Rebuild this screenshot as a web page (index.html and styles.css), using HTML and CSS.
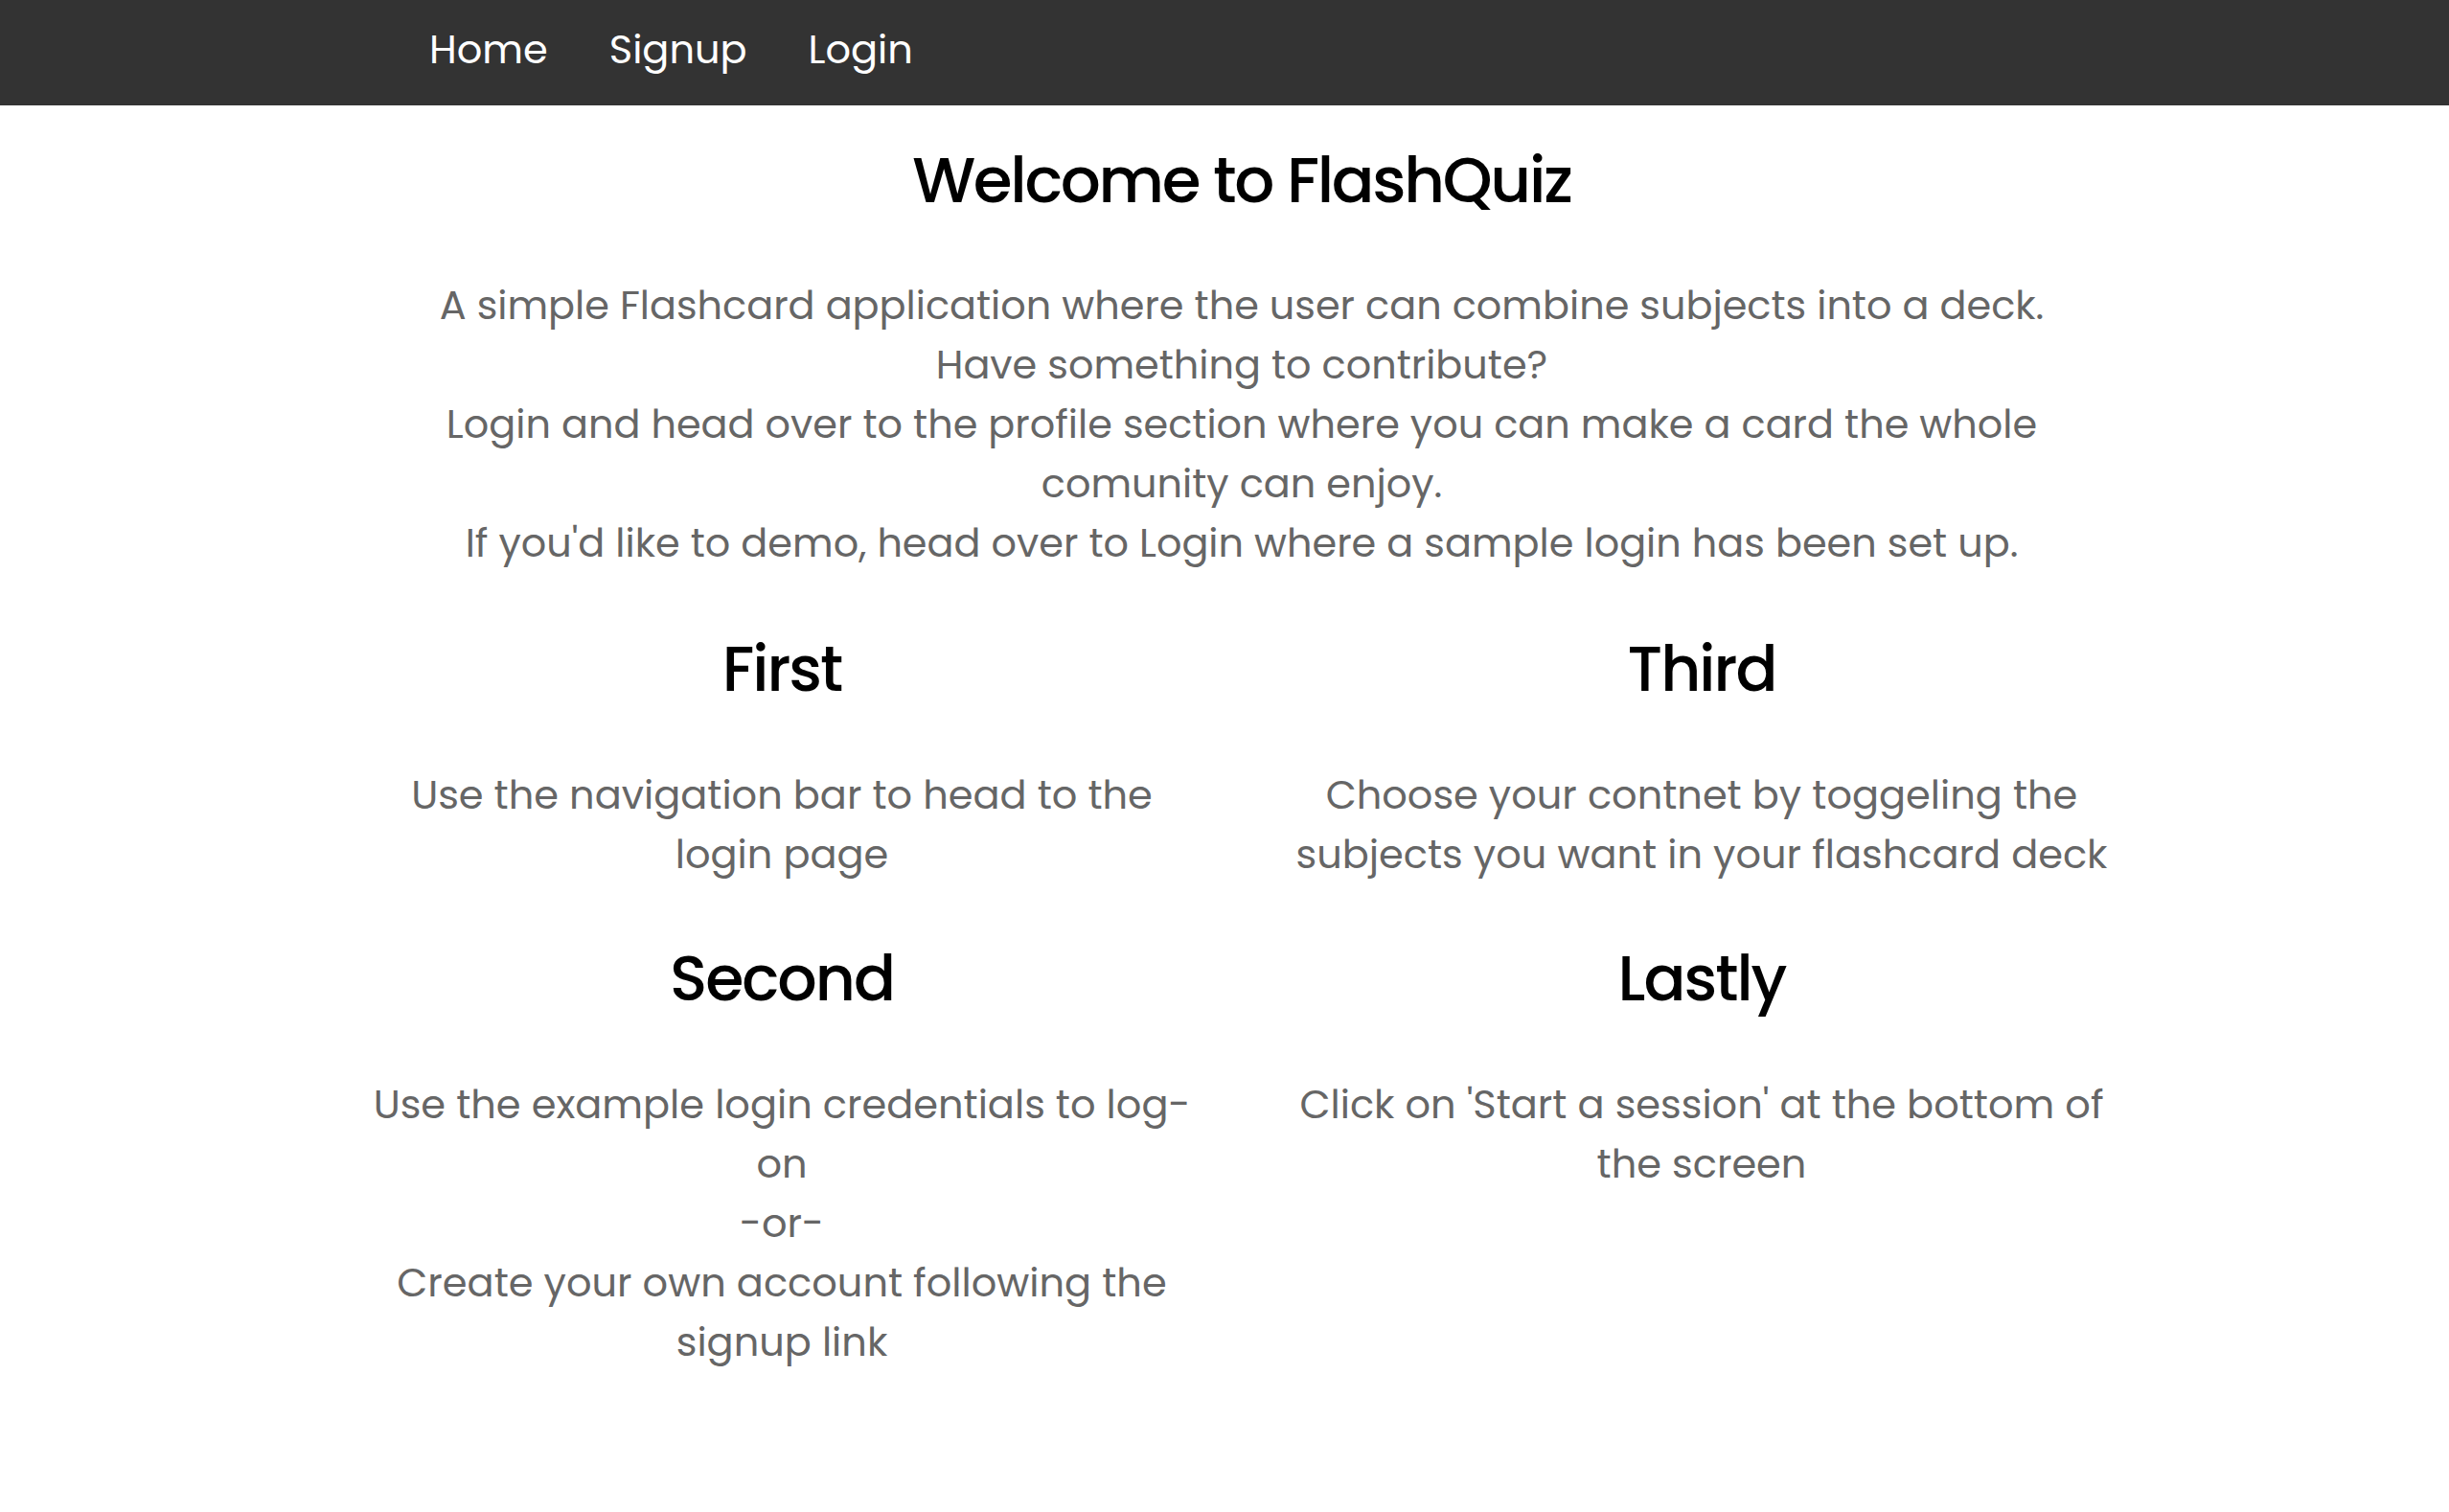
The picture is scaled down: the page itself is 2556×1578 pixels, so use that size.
FILE: index.html
```html
<!DOCTYPE html>
<html lang="en">
<head>
<meta charset="utf-8">
<title>FlashQuiz</title>
<link rel="stylesheet" href="styles.css">
</head>
<body>
<nav class="navbar">
  <a class="nav-link" href="#">Home</a>
  <a class="nav-link" href="#">Signup</a>
  <a class="nav-link" href="#">Login</a>
</nav>
<main class="main">
  <h1 class="title">Welcome to FlashQuiz</h1>
  <p class="intro">A simple Flashcard application where the user can combine subjects into a deck.<br>Have something to contribute?<br>Login and head over to the profile section where you can make a card the whole comunity can enjoy.<br>If you'd like to demo, head over to Login where a sample login has been set up.</p>
  <section class="steps">
    <div class="step">
      <h2 class="step-title">First</h2>
      <p class="step-text">Use the navigation bar to head to the login page</p>
    </div>
    <div class="step">
      <h2 class="step-title">Third</h2>
      <p class="step-text">Choose your contnet by toggeling the subjects you want in your flashcard deck</p>
    </div>
    <div class="step">
      <h2 class="step-title">Second</h2>
      <p class="step-text">Use the example login credentials to log-on<br>-or-<br>Create your own account following the signup link</p>
    </div>
    <div class="step">
      <h2 class="step-title">Lastly</h2>
      <p class="step-text">Click on 'Start a session' at the bottom of the screen</p>
    </div>
  </section>
</main>
</body>
</html>
```
FILE: styles.css
```css
* { box-sizing: border-box; }
html, body {
  margin: 0;
  padding: 0;
  background: #fff;
}
body {
  font-family: "Poppins", "Inter", "Open Sans", sans-serif;
  color: #666;
}
.navbar {
  height: 110px;
  background: #333;
  display: flex;
  align-items: center;
  gap: 64px;
  padding: 0 0 6px 448px;
}
.nav-link {
  color: #fff;
  text-decoration: none;
  font-size: 41.5px;
  line-height: 50px;
}
.main {
  padding: 0 0 0 36px;
}
.title {
  margin: 38px 0 0;
  text-align: center;
  color: #000;
  font-size: 66px;
  line-height: 80px;
  font-weight: 500;
  letter-spacing: -2.3px;
}
.intro {
  margin: 60px auto 0;
  max-width: 1750px;
  text-align: center;
  font-size: 41.4px;
  line-height: 62px;
}
.steps {
  width: 1920px;
  margin: 63px auto 0;
  display: grid;
  grid-template-columns: 1fr 1fr;
  row-gap: 61px;
}
.step {
  padding: 0 49px;
  text-align: center;
}
.step-title {
  margin: 0;
  color: #000;
  font-size: 65px;
  line-height: 76px;
  font-weight: 500;
  letter-spacing: -2px;
}
.step-text {
  margin: 62px 0 0;
  font-size: 41.5px;
  line-height: 62px;
}
```
